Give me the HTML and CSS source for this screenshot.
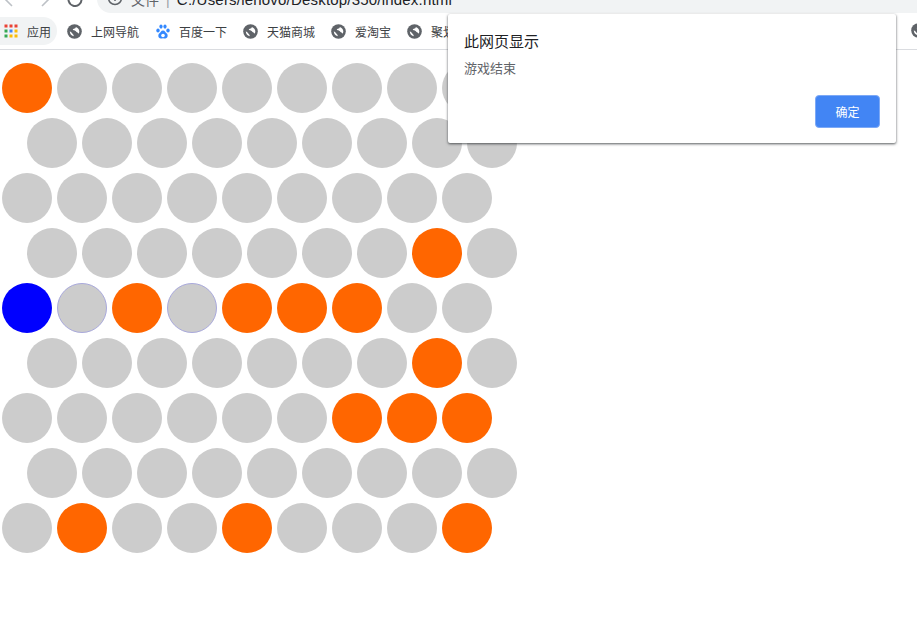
FILE: index.html
```html
<!DOCTYPE html>
<html lang="zh-CN">
<head>
    <meta charset="UTF-8">
    <meta name="viewport" content="width=device-width, initial-scale=1.0">
    <title>index.html</title>
    <link rel="stylesheet" href="styles.css">
</head>
<body>
    <svg class="defs" width="0" height="0">
        <symbol id="globe" viewBox="0 0 15 15">
            <circle cx="7.500" cy="7.500" r="7.300"/>
            <path fill="#fff" d="M8.800 2.900C8.900 3.800 8.300 4.300 7.400 4.600 6.500 4.900 5.900 5.300 5.700 6 6.800 6.200 7.800 6.300 8.600 6.900 9.300 7.400 9.700 8.200 10.500 8.600 11 8.900 11.300 9.300 11.500 9.700 12 9 12.300 8.300 12.300 7.500 12.300 5.400 10.800 3.500 8.800 2.900Z"/>
            <path fill="#fff" d="M2.800 7.200C2.800 9.500 4.300 11.700 6.600 12.200 6.800 11.600 6.700 11.100 6.200 10.600 5.600 10 5.400 9.300 4.800 8.700 4.200 8.100 3.500 7.700 2.800 7.200Z"/>
        </symbol>
    </svg>

    <header class="browser">
        <div class="toolbar">
            <div class="nav">
                <svg class="nav-icon" viewBox="0 0 16 16"><path d="M10 1 3 8l7 7"/></svg>
                <svg class="nav-icon" viewBox="0 0 16 16"><path d="M6 1l7 7-7 7"/></svg>
                <svg class="nav-icon" viewBox="0 0 16 16"><path d="M13.500 5A6.500 6.500 0 1 0 14.500 8M14 1v4h-4"/></svg>
            </div>
            <div class="omnibox">
                <svg class="info" viewBox="0 0 16 16"><circle cx="8" cy="8" r="6.500"/><path d="M8 7v4M8 4.500v1"/></svg>
                <span class="scheme">文件</span>
                <span class="divider">|</span>
                <span class="url">C:/Users/lenovo/Desktop/350/index.html</span>
            </div>
        </div>
        <nav class="bookmarks">
            <div class="bookmark apps">
                <svg class="apps-icon" viewBox="0 0 14 14">
                    <rect x="0.500" y="0.500" width="3" height="3" fill="#ea4335"/>
                    <rect x="5.500" y="0.500" width="3" height="3" fill="#ea4335"/>
                    <rect x="10.500" y="0.500" width="3" height="3" fill="#ea4335"/>
                    <rect x="0.500" y="5.500" width="3" height="3" fill="#34a853"/>
                    <rect x="5.500" y="5.500" width="3" height="3" fill="#4285f4"/>
                    <rect x="10.500" y="5.500" width="3" height="3" fill="#fbbc05"/>
                    <rect x="0.500" y="10.500" width="3" height="3" fill="#34a853"/>
                    <rect x="5.500" y="10.500" width="3" height="3" fill="#fbbc05"/>
                    <rect x="10.500" y="10.500" width="3" height="3" fill="#fbbc05"/>
                </svg>
                <span>应用</span>
            </div>
            <div class="bookmark"><svg class="favicon"><use href="#globe"/></svg><span>上网导航</span></div>
            <div class="bookmark">
                <svg class="paw" viewBox="0 0 14 15">
                    <ellipse cx="2" cy="6.500" rx="1.700" ry="2.100"/>
                    <ellipse cx="5" cy="2.600" rx="1.600" ry="2.100"/>
                    <ellipse cx="9" cy="2.600" rx="1.600" ry="2.100"/>
                    <ellipse cx="12" cy="6.500" rx="1.700" ry="2.100"/>
                    <path d="M7 6.500C5 6.500 4.500 8.500 3.200 9.600 1.800 10.800 2 14.500 4.800 14.500 5.800 14.500 6.300 14.200 7 14.200S8.200 14.500 9.200 14.500C12 14.500 12.200 10.800 10.800 9.600 9.500 8.500 9 6.500 7 6.500Z"/>
                    <circle class="paw-mark" cx="7" cy="11.500" r="1.800"/>
                </svg>
                <span>百度一下</span>
            </div>
            <div class="bookmark"><svg class="favicon"><use href="#globe"/></svg><span>天猫商城</span></div>
            <div class="bookmark"><svg class="favicon"><use href="#globe"/></svg><span>爱淘宝</span></div>
            <div class="bookmark"><svg class="favicon"><use href="#globe"/></svg><span>聚划算</span></div>
            <div class="bookmark last"><svg class="favicon"><use href="#globe"/></svg></div>
        </nav>
    </header>

    <main class="board">
        <div class="row">
            <span class="dot hit"></span><span class="dot"></span><span class="dot"></span><span class="dot"></span><span class="dot"></span><span class="dot"></span><span class="dot"></span><span class="dot"></span><span class="dot"></span>
        </div>
        <div class="row odd">
            <span class="dot"></span><span class="dot"></span><span class="dot"></span><span class="dot"></span><span class="dot"></span><span class="dot"></span><span class="dot"></span><span class="dot"></span><span class="dot"></span>
        </div>
        <div class="row">
            <span class="dot"></span><span class="dot"></span><span class="dot"></span><span class="dot"></span><span class="dot"></span><span class="dot"></span><span class="dot"></span><span class="dot"></span><span class="dot"></span>
        </div>
        <div class="row odd">
            <span class="dot"></span><span class="dot"></span><span class="dot"></span><span class="dot"></span><span class="dot"></span><span class="dot"></span><span class="dot"></span><span class="dot hit"></span><span class="dot"></span>
        </div>
        <div class="row">
            <span class="dot cat"></span><span class="dot tried"></span><span class="dot hit"></span><span class="dot tried"></span><span class="dot hit"></span><span class="dot hit"></span><span class="dot hit"></span><span class="dot"></span><span class="dot"></span>
        </div>
        <div class="row odd">
            <span class="dot"></span><span class="dot"></span><span class="dot"></span><span class="dot"></span><span class="dot"></span><span class="dot"></span><span class="dot"></span><span class="dot hit"></span><span class="dot"></span>
        </div>
        <div class="row">
            <span class="dot"></span><span class="dot"></span><span class="dot"></span><span class="dot"></span><span class="dot"></span><span class="dot"></span><span class="dot hit"></span><span class="dot hit"></span><span class="dot hit"></span>
        </div>
        <div class="row odd">
            <span class="dot"></span><span class="dot"></span><span class="dot"></span><span class="dot"></span><span class="dot"></span><span class="dot"></span><span class="dot"></span><span class="dot"></span><span class="dot"></span>
        </div>
        <div class="row">
            <span class="dot"></span><span class="dot hit"></span><span class="dot"></span><span class="dot"></span><span class="dot hit"></span><span class="dot"></span><span class="dot"></span><span class="dot"></span><span class="dot hit"></span>
        </div>
    </main>

    <div class="alert">
        <h2 class="alert-title">此网页显示</h2>
        <p class="alert-text">游戏结束</p>
        <div class="alert-actions">
            <button type="button" class="alert-btn">确定</button>
        </div>
    </div>
</body>
</html>
```

FILE: styles.css
```css
body {
    font-family: 'Liberation Sans', 'Noto Sans CJK SC', sans-serif;
    background-color: #fff;
    margin: 0;
    overflow: hidden;
}

.defs {
    position: absolute;
}

.browser {
    height: 50px;
    box-sizing: border-box;
    border-bottom: 1px solid #dadce0;
    overflow: hidden;
}

.toolbar {
    display: flex;
    height: 13px;
    overflow: hidden;
}

.nav {
    display: flex;
    gap: 18px;
    width: 97px;
    padding-left: 2px;
    box-sizing: border-box;
    margin-top: -9px;
}

.nav-icon {
    width: 16px;
    height: 16px;
    fill: none;
    stroke: #bdc1c6;
    stroke-width: 1.6;
}

.nav-icon:last-child {
    margin-left: -3px;
    stroke: #5f6368;
    stroke-width: 2;
}

.omnibox {
    display: flex;
    flex: 1;
    height: 21px;
    margin-top: -8px;
    background-color: #f1f3f4;
    border-radius: 0 0 0 14px;
    padding-left: 10px;
    font-size: 15px;
    letter-spacing: 0.2px;
    color: #202124;
    line-height: 16px;
    white-space: nowrap;
}

.info {
    width: 16px;
    height: 16px;
    margin: -2px 8px 0 0;
    fill: none;
    stroke: #5f6368;
    stroke-width: 1.5;
}

.scheme {
    font-size: 14px;
    letter-spacing: 0;
    color: #5f6368;
}

.divider {
    font-size: 14px;
    color: #9aa0a6;
    margin: 0 7px;
}

.bookmarks {
    display: flex;
    align-items: center;
    gap: 17px;
    height: 36px;
    font-size: 12px;
    color: #3c4043;
    white-space: nowrap;
}

.bookmark {
    display: flex;
    align-items: center;
    gap: 9px;
}

.bookmark.last {
    position: absolute;
    left: 912px;
    top: 23px;
}

.apps {
    width: 57px;
    height: 28px;
    box-sizing: border-box;
    padding-left: 4px;
    background-color: #f1f3f4;
    border-radius: 0 14px 14px 0;
    margin-right: -6px;
}

.apps-icon {
    width: 14px;
    height: 14px;
}

.favicon {
    width: 15px;
    height: 15px;
    margin-left: -1px;
    fill: #5f6368;
    flex-shrink: 0;
}

.paw {
    width: 14px;
    height: 15px;
    fill: #3388ff;
    flex-shrink: 0;
}

.paw-mark {
    fill: #fff;
}

.board {
    padding: 13px 0 0 2px;
}

.row {
    display: flex;
    gap: 5px;
    margin-bottom: 5px;
}

.row.odd {
    padding-left: 25px;
}

.dot {
    width: 50px;
    height: 50px;
    box-sizing: border-box;
    border-radius: 50%;
    background-color: #ccc;
}

.dot.hit {
    background-color: #ff6600;
}

.dot.cat {
    background-color: #0000ff;
}

.dot.tried {
    border: 1px solid #a9a9dc;
}

.alert {
    position: absolute;
    left: 448px;
    top: 14px;
    width: 448px;
    height: 129px;
    box-sizing: border-box;
    padding: 20px 16px 16px;
    background-color: #fff;
    border-radius: 2px;
    box-shadow: 0 1px 3px rgba(60, 64, 67, 0.6), 0 1px 2px rgba(60, 64, 67, 0.4);
}

.alert-title {
    margin: 0;
    font-size: 15px;
    font-weight: normal;
    line-height: 16px;
    color: #202124;
}

.alert-text {
    margin: 11px 0 0;
    font-size: 13px;
    line-height: 16px;
    color: #5f6368;
}

.alert-actions {
    display: flex;
    justify-content: flex-end;
    margin-top: 18px;
}

.alert-btn {
    width: 65px;
    height: 33px;
    padding: 0;
    font-family: inherit;
    font-size: 12px;
    color: #fff;
    background-color: #4285f4;
    border: 1px solid #7da9f6;
    border-radius: 4px;
}
```
